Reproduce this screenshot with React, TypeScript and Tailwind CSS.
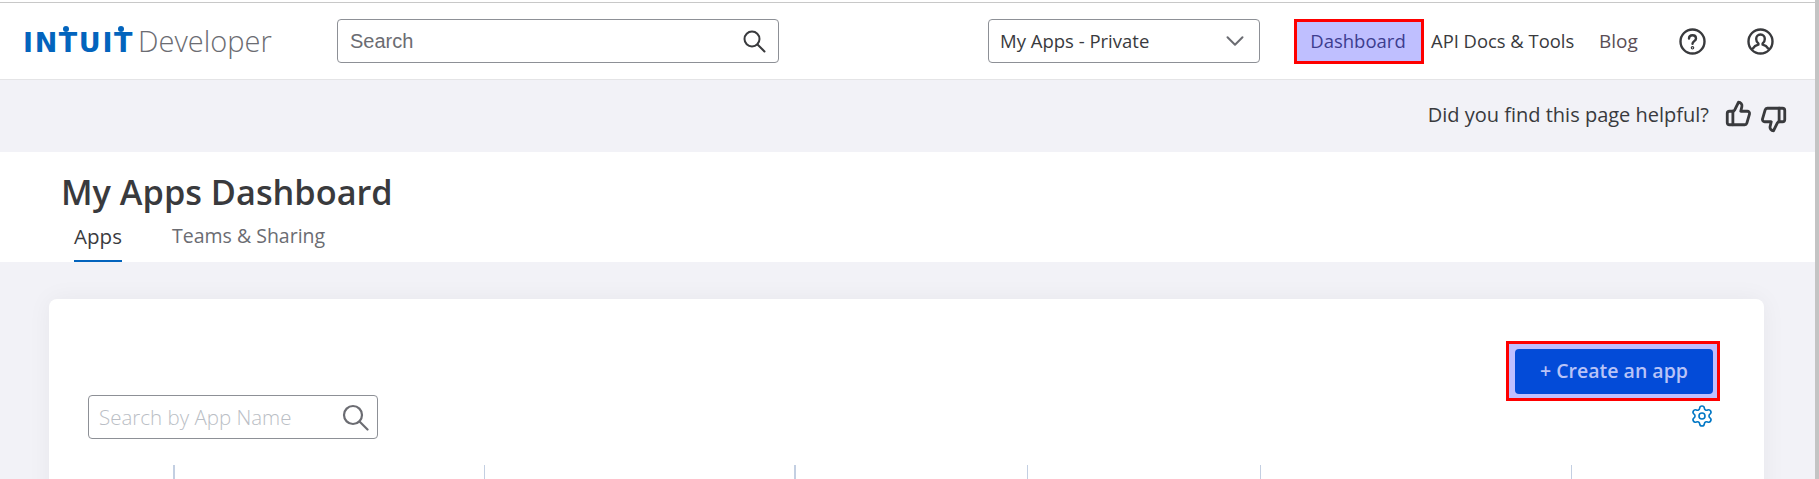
import { ThumbsUp, ThumbsDown, ChevronDown, Settings } from "lucide-react";

const font = { fontFamily: "'Open Sans', Lato, sans-serif" };

function HelpIcon() {
  return (
    <svg width="27" height="27" viewBox="0 0 27 27" fill="none" stroke="#393a3d" strokeWidth="2.4" strokeLinecap="round">
      <circle cx="13.5" cy="13.5" r="12" />
      <path d="M10 10.6c0-2 1.5-3.3 3.5-3.3s3.5 1.3 3.5 3.1c0 2.7-3.5 2.8-3.5 5.4" />
      <circle cx="13.5" cy="19.8" r="0.6" />
    </svg>
  );
}

function UserIcon() {
  return (
    <svg width="27" height="27" viewBox="0 0 27 27" fill="none" stroke="#393a3d" strokeWidth="2.4" strokeLinecap="round" strokeLinejoin="round">
      <circle cx="13.5" cy="13.5" r="12" />
      <path d="M13.5 6.5c-2.6 0-4.3 1.9-4.3 4.5 0 2 .9 3.6 2.2 4.5v1.2c-2.4.6-4.4 1.8-5.4 3.6M13.5 6.5c2.6 0 4.3 1.9 4.3 4.5 0 2-.9 3.6-2.2 4.5v1.2c2.4.6 4.4 1.8 5.4 3.6" />
    </svg>
  );
}

function Logo() {
  return (
    <div className="flex items-baseline ml-[23px] w-[251px] shrink-0">
      <span className="relative w-[112px] text-[27px] leading-none font-bold tracking-[1.6px] text-[#0364bd] [font-family:'DejaVu_Sans',sans-serif]">
        INTUIT
        <span className="absolute left-[40px] top-[-3px] w-[6px] h-[6px] rounded-full bg-[#0364bd]" />
        <span className="absolute left-[95px] top-[-3px] w-[6px] h-[6px] rounded-full bg-[#0364bd]" />
      </span>
      <span className="ml-[3px] text-[29px] leading-none font-light text-[#6b6c72]">Developer</span>
    </div>
  );
}

export default function App() {
  return (
    <div className="flex h-[479px] w-[1819px] overflow-hidden bg-white" style={font}>
      <main className="w-[1815px] shrink-0 flex flex-col">
        <div className="h-[3px] shrink-0 border-b border-[#c8c8c8] bg-white" />
        <header className="h-[77px] shrink-0 flex items-center border-b border-[#e4e4e6] bg-white">
          <Logo />
          <div className="ml-[63px] w-[442px] h-[44px] flex items-center rounded-[4px] border border-[#8d9096] pl-[12px] pr-[11px] shrink-0">
            <input
              placeholder="Search"
              className="flex-1 min-w-0 text-[20px] outline-none placeholder:text-[#6b6c72] [font-family:'Liberation_Sans',sans-serif]"
            />
            <svg width="25" height="25" viewBox="0 0 25 25" fill="none" stroke="#393a3d" strokeWidth="2" strokeLinecap="round">
              <circle cx="10" cy="10" r="7.5" />
              <path d="M15.5 15.5l7 7" />
            </svg>
          </div>
          <div className="ml-[209px] w-[272px] h-[44px] flex items-center justify-between rounded-[4px] border border-[#8d9096] pl-[11px] pr-[9px] shrink-0">
            <span className="text-[18.5px] font-medium text-[#393a3d]">My Apps - Private</span>
            <ChevronDown size={30} strokeWidth={1.6} color="#6b6c72" />
          </div>
          <div className="ml-[34px] w-[130px] h-[45px] flex items-center justify-center border-[3px] border-[#fe0000] bg-[#bfbfff] pr-[2px] text-[18.5px] text-[#3d3d8f] shrink-0">
            Dashboard
          </div>
          <span className="w-[143px] ml-[7px] text-[18.4px] whitespace-nowrap text-[#393a3d] shrink-0">API Docs &amp; Tools</span>
          <span className="w-[39px] ml-[25px] text-[19px] text-[#5a4e55] shrink-0">Blog</span>
          <div className="ml-[41px] shrink-0 flex"><HelpIcon /></div>
          <div className="ml-[41px] shrink-0 flex"><UserIcon /></div>
        </header>
        <section className="h-[72px] shrink-0 flex items-start justify-end bg-[#f2f2f7] pt-[20px] pr-[28px]">
          <span className="text-[20px] leading-[28px] mt-[1px] text-[#393a3d]">Did you find this page helpful?</span>
          <ThumbsUp size={27} strokeWidth={2.5} color="#393a3d" className="ml-[16px]" />
          <ThumbsDown size={27} strokeWidth={2.5} color="#393a3d" className="ml-[8px] mt-[6px]" />
        </section>
        <section className="h-[110px] shrink-0 bg-white pl-[61px] flex flex-col">
          <h1 className="mt-[20px] text-[34.3px] leading-[40px] font-semibold text-[#393a3d]">My Apps Dashboard</h1>
          <div className="mt-[7px] flex pl-[13px] gap-[50px] text-[19.5px] leading-[26px]">
            <span className="w-[48px] text-center h-[43px] pt-[4px] border-b-2 border-[#0364bd] text-[20.5px] text-[#393a3d]">Apps</span>
            <span className="pt-[4px] text-[#6b6c72]">Teams &amp; Sharing</span>
          </div>
        </section>
        <section className="flex-1 min-h-0 bg-[#f2f2f7] pt-[37px] pl-[49px] pr-[51px] overflow-hidden">
          <div className="h-[300px] rounded-t-[8px] bg-white shadow-[0_0_24px_rgba(0,0,0,0.05)] pt-[42px] pl-[39px] pr-[44px]">
            <div className="flex justify-between h-[98px]">
              <div className="self-end w-[290px] h-[44px] flex items-center justify-between rounded-[4px] border border-[#8d9096] pl-[10px] pr-[8px]">
                <input
                  placeholder="Search by App Name"
                  className="w-[235px] pt-[1px] text-[20.5px] font-light outline-none placeholder:text-[#babec5]"
                />
                <svg width="27" height="27" viewBox="0 0 27 27" fill="none" stroke="#6b6c72" strokeWidth="2.2" strokeLinecap="round">
                  <circle cx="11" cy="11" r="9" />
                  <path d="M17.5 17.5l8 8" />
                </svg>
              </div>
              <div className="flex flex-col items-end">
                <div className="w-[214px] h-[60px] border-[3px] border-[#fe0000] bg-[#bfbfff] flex items-center justify-center">
                  <div className="ml-[2px] w-[198px] h-[45px] rounded-[4px] bg-[#034bd8] flex items-center justify-center text-[19.5px] font-semibold text-[#b9c3f7]">
                    + Create an app
                  </div>
                </div>
                <Settings size={24} strokeWidth={1.6} color="#0077c5" className="mt-[3px] mr-[6px]" />
              </div>
            </div>
            <div className="mt-[26px] ml-[85px] flex h-[20px]">
              <div className="w-[311px] border-l-2 border-[#c3cfe2]" />
              <div className="w-[310px] border-l border-[#c3cfe2]" />
              <div className="w-[233px] border-l-2 border-[#c3cfe2]" />
              <div className="w-[233px] border-l border-[#c3cfe2]" />
              <div className="w-[311px] border-l border-[#c3cfe2]" />
              <div className="w-[100px] border-l border-[#c3cfe2]" />
            </div>
          </div>
        </section>
      </main>
      <div className="w-[4px] shrink-0 bg-[#c4c4c4]" />
    </div>
  );
}
